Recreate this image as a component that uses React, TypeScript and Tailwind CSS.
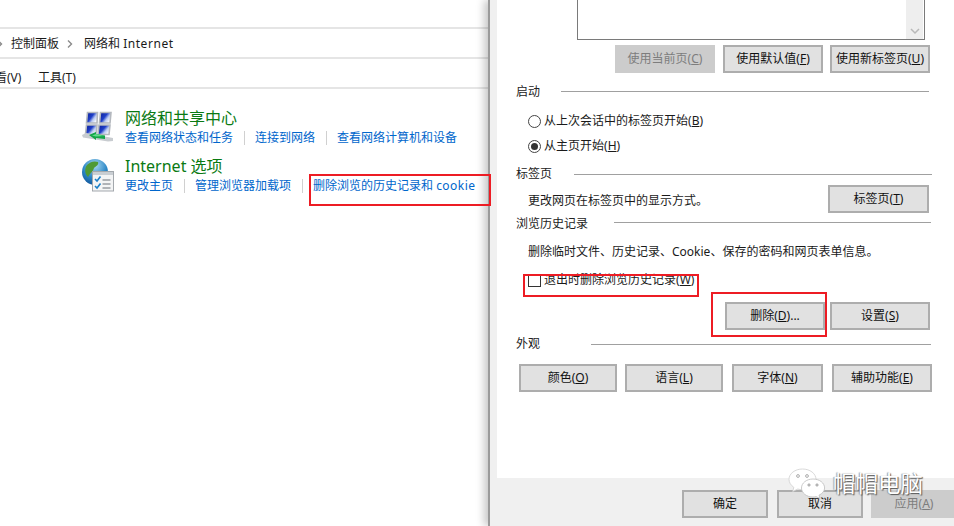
import React from "react";

function Acc({ before, k, after }: { before: string; k: string; after?: string }) {
  return (
    <>
      {before}(<span className="underline underline-offset-1">{k}</span>){after}
    </>
  );
}

function Btn({ w, disabled, ml, children }: { w: string; disabled?: boolean; ml?: string; children: React.ReactNode }) {
  return (
    <div
      className={`${w} ${ml ?? ""} h-[28px] shrink-0 flex items-center justify-center border-2 text-[12px] leading-none ${
        disabled ? "bg-[#cccccc] border-[#cccccc] text-[#7d7d7d]" : "bg-[#e1e1e1] border-[#adadad] text-[#111111]"
      }`}
    >
      <span>{children}</span>
    </div>
  );
}

function Section({ title, lineLeft, lineW, mt }: { title: string; lineLeft: string; lineW: string; mt: string }) {
  return (
    <div className={`flex items-center h-[16px] ${mt} ml-[19px] text-[12px] text-[#222222]`}>
      <span className={`${lineLeft} shrink-0`}>{title}</span>
      <span className={`${lineW} h-px bg-[#a0a0a0]`} />
    </div>
  );
}

function NetIcon() {
  return (
    <svg width="32" height="31" viewBox="0 0 32 31" className="block">
      <defs>
        <linearGradient id="scr" x1="0" y1="0" x2="1" y2="0.7">
          <stop offset="0" stopColor="#0a1c94" />
          <stop offset="0.5" stopColor="#1f3fc8" />
          <stop offset="0.72" stopColor="#b9c9f2" />
          <stop offset="1" stopColor="#ffffff" />
        </linearGradient>
      </defs>
      <g stroke="#b4b8be" strokeWidth="1.6">
        <polygon points="5.5,1.5 15.5,1.5 15,12 4.5,12" fill="url(#scr)" />
        <polygon points="18.5,1.5 29,1.5 28,12 17.5,12" fill="url(#scr)" />
        <polygon points="4.5,14 15,14 14,23.5 3.5,23.5" fill="url(#scr)" />
        <polygon points="17,14 28,14 27,23.5 16,23.5" fill="url(#scr)" />
      </g>
      <polygon points="0,24 4,22 31,27 31,30 26,30.5 1,26.5" fill="#c8ccd0" />
      <polygon points="7,24 14,21 14,23 23,24.5 23,28 14,27 14,29" fill="#14a548" />
      <polygon points="10,24.5 14,23 22,25 14,25.5" fill="#63dc8c" />
    </svg>
  );
}

function GlobeIcon() {
  return (
    <svg width="32" height="33" viewBox="0 0 32 33" className="block mt-[2px]">
      <defs>
        <radialGradient id="glb" cx="0.5" cy="0.25" r="0.85">
          <stop offset="0" stopColor="#a8d8f0" />
          <stop offset="0.55" stopColor="#2a86c6" />
          <stop offset="1" stopColor="#0d4a90" />
        </radialGradient>
      </defs>
      <circle cx="13" cy="13" r="13" fill="url(#glb)" />
      <path d="M5 6 C9 2 13 2 16 3 C17 6 14 7 12 9 C11 13 8 14 6 18 C3 15 2 10 5 6Z" fill="#4f9a35" />
      <path d="M14 16 C18 14 22 16 22 19 C20 23 16 25 13 24 C14 21 12 19 14 16Z" fill="#5aa83a" />
      <rect x="10.5" y="12.5" width="21" height="19.5" fill="#f3f4f5" stroke="#a3a8ad" />
      <rect x="11" y="13" width="20" height="3" fill="#c9ced3" />
      <path d="M13 20 L15 22 L18.5 17.5" fill="none" stroke="#1b7fc7" strokeWidth="1.6" />
      <path d="M13 27 L15 29 L18.5 24.5" fill="none" stroke="#1b7fc7" strokeWidth="1.6" />
      <path d="M20.5 21 H28.5 M20.5 25 H28.5 M20.5 29 H28.5" stroke="#6a7078" strokeWidth="1" />
    </svg>
  );
}

function WeChat() {
  return (
    <svg width="38" height="31" viewBox="0 0 38 31" className="block">
      <path d="M14.5 1 C7 1 1 5.6 1 11.4 C1 14.6 3 17.4 5.8 19.3 L4.7 23.6 L9.8 21 C11.3 21.5 12.9 21.7 14.5 21.7 C22 21.7 28 17 28 11.4 C28 5.6 22 1 14.5 1Z" fill="#ffffff" stroke="#cfcfcf" strokeWidth="0.8" />
      <circle cx="10" cy="8" r="1.4" fill="#ffffff" stroke="#8a8a8a" strokeWidth="0.7" />
      <circle cx="19" cy="8" r="1.4" fill="#ffffff" stroke="#8a8a8a" strokeWidth="0.7" />
      <path d="M25 11 C18.5 11 13.5 15 13.5 20 C13.5 25 18.5 29 25 29 C26 29 27.2 28.9 28.2 28.6 L32 30.5 L31 27.2 C34.5 25.5 36.6 23 36.6 20 C36.6 15 31.5 11 25 11Z" fill="#ffffff" stroke="#bdbdbd" strokeWidth="0.8" />
      <circle cx="21" cy="17" r="1.1" fill="#ffffff" stroke="#777777" strokeWidth="0.7" />
      <circle cx="29" cy="17" r="1.1" fill="#ffffff" stroke="#777777" strokeWidth="0.7" />
    </svg>
  );
}

function Sep() {
  return <span className="w-px h-[14px] bg-[#d0d0d0] mx-[10.5px] shrink-0" />;
}

export default function App() {
  return (
    <div
      className="relative w-[954px] h-[526px] overflow-hidden flex bg-white"
      style={{ fontFamily: '"Noto Sans", "Noto Sans CJK SC", sans-serif' }}
    >
      {/* Control panel window */}
      <div className="w-[488px] shrink-0 flex flex-col text-[12px] text-[#1a1a1a]">
        <div className="h-[29px] border-b-2 border-[#e5e5e5]" />
        <div className="h-[30px] border-b-2 border-[#e5e5e5] flex items-center pt-[2px]">
          <svg width="3" height="10" viewBox="0 0 3 10" className="mr-[8px]">
            <path d="M-2 1.5 L1.5 5 L-2 8.5" fill="none" stroke="#8a8a8a" strokeWidth="1.4" />
          </svg>
          <span>控制面板</span>
          <svg width="8" height="10" viewBox="0 0 8 10" className="ml-[7px] mr-[10px]">
            <path d="M2 1.5 L5.5 5 L2 8.5" fill="none" stroke="#8a8a8a" strokeWidth="1.4" />
          </svg>
          <span>网络和 <span className="tracking-[0.55px]">Internet</span></span>
        </div>
        <div className="h-[30px] border-b-2 border-[#e5e5e5] flex items-center pl-[38px] pt-[9px]">
          <span className="ml-[-43px] w-[43px] shrink-0">看(V)</span>
          <span>工具(T)</span>
        </div>
        <div className="flex pl-[82px] pt-[22px]">
          <div className="w-[43px] shrink-0"><NetIcon /></div>
          <div className="flex flex-col">
            <div className="text-[16px] leading-[20px] mt-[-3px] mb-[1px] text-[#0a7a12]">网络和共享中心</div>
            <div className="flex items-center h-[18px] text-[#0066cc]">
              <span>查看网络状态和任务</span><Sep />
              <span>连接到网络</span><Sep />
              <span>查看网络计算机和设备</span>
            </div>
          </div>
        </div>
        <div className="flex pl-[82px] pt-[10px]">
          <div className="w-[43px] shrink-0"><GlobeIcon /></div>
          <div className="flex flex-col">
            <div className="text-[16px] leading-[20px] mt-[-1px] mb-[1px] text-[#0a7a12]">Internet 选项</div>
            <div className="flex items-center h-[18px] text-[#0066cc]">
              <span>更改主页</span><Sep />
              <span>管理浏览器加载项</span><Sep />
              <span>删除浏览的历史记录和 <span className="tracking-[0.45px]">cookie</span></span>
            </div>
          </div>
        </div>
      </div>

      {/* Internet options dialog */}
      <div className="relative flex-1 flex flex-col bg-[#f0f0f0] border-l-2 border-[#9a9a9a] shadow-[-4px_0_8px_rgba(0,0,0,0.22)]">
        <div className="ml-[7px] h-[478px] bg-white flex flex-col text-[12px] text-[#1a1a1a]">
          <div className="ml-[80px] w-[348px] h-[40px] border border-t-0 border-[#7a7a7a] flex justify-end">
            <div className="w-[17px] mr-px bg-[#eeeeee] flex items-end justify-center pb-[4px]">
              <svg width="10" height="7" viewBox="0 0 10 7"><path d="M1 1 L5 5 L9 1" fill="none" stroke="#b8b8b8" strokeWidth="1.5" /></svg>
            </div>
          </div>
          <div className="flex mt-[5px] ml-[118px]">
            <Btn w="w-[100px]" disabled><Acc before="使用当前页" k="C" /></Btn>
            <Btn w="w-[100px]" ml="ml-[8px]"><Acc before="使用默认值" k="F" /></Btn>
            <Btn w="w-[100px]" ml="ml-[7px]"><Acc before="使用新标签页" k="U" /></Btn>
          </div>
          <Section title="启动" lineLeft="w-[45px]" lineW="w-[368px] mb-[2px]" mt="mt-[11px]" />
          <div className="flex items-center h-[16px] mt-[13px] ml-[31px]">
            <span className="w-[13px] h-[13px] rounded-full border border-[#444444] bg-white" />
            <span className="ml-[3px]"><Acc before="从上次会话中的标签页开始" k="B" /></span>
          </div>
          <div className="flex items-center h-[16px] mt-[9px] ml-[31px]">
            <span className="w-[13px] h-[13px] rounded-full border border-[#444444] bg-white flex items-center justify-center">
              <span className="w-[7px] h-[7px] rounded-full bg-[#333333]" />
            </span>
            <span className="ml-[3px]"><Acc before="从主页开始" k="H" /></span>
          </div>
          <Section title="标签页" lineLeft="w-[58px]" lineW="w-[358px]" mt="mt-[12px]" />
          <div className="flex items-center ml-[31px] mt-[3px] h-[28px]">
            <span className="w-[300px] pt-[3px]">更改网页在标签页中的显示方式。</span>
            <Btn w="w-[101px]"><Acc before="标签页" k="T" /></Btn>
          </div>
          <Section title="浏览历史记录" lineLeft="w-[98px]" lineW="w-[317px] mb-[4px]" mt="mt-[3px]" />
          <div className="flex items-center ml-[31px] mt-[12px] h-[16px]">删除临时文件、历史记录、Cookie、保存的密码和网页表单信息。</div>
          <div className="flex items-center ml-[31px] mt-[12px] h-[16px]">
            <span className="w-[13px] h-[13px] border border-[#333333] bg-white" />
            <span className="ml-[3px]"><Acc before="退出时删除浏览历史记录" k="W" /></span>
          </div>
          <div className="flex ml-[228px] mt-[14px]">
            <Btn w="w-[100px]"><Acc before="删除" k="D" after="..." /></Btn>
            <Btn w="w-[100px]" ml="ml-[5px]"><Acc before="设置" k="S" /></Btn>
          </div>
          <Section title="外观" lineLeft="w-[75px]" lineW="w-[340px]" mt="mt-[6px]" />
          <div className="flex ml-[22px] mt-[12px]">
            <Btn w="w-[98px]"><Acc before="颜色" k="O" /></Btn>
            <Btn w="w-[98px]" ml="ml-[8px]"><Acc before="语言" k="L" /></Btn>
            <Btn w="w-[91px]" ml="ml-[9px]"><Acc before="字体" k="N" /></Btn>
            <Btn w="w-[100px]" ml="ml-[9px]"><Acc before="辅助功能" k="E" /></Btn>
          </div>
        </div>
        <div className="flex mt-[12px] ml-[192px]">
          <Btn w="w-[86px]">确定</Btn>
          <Btn w="w-[86px]" ml="ml-[9px]">取消</Btn>
          <Btn w="w-[86px]" ml="ml-[8px]" disabled><Acc before="应用" k="A" /></Btn>
        </div>
      </div>

      {/* Red annotation boxes */}
      <div className="absolute left-[309px] top-[174px] w-[182px] h-[32px] border-[2px] border-[#ed1c24]" />
      <div className="absolute left-[523px] top-[274px] w-[176px] h-[23px] border-[2px] border-[#ed1c24]" />
      <div className="absolute left-[711px] top-[292px] w-[116px] h-[45px] border-[2px] border-[#ed1c24]" />

      {/* Watermark */}
      <div className="absolute left-[788px] top-[468px]"><WeChat /></div>
      <div className="absolute left-[833px] top-[469px] text-[22.5px] leading-[30px] text-white whitespace-nowrap [text-shadow:1px_1px_1px_#555555,-1px_0_1px_#999999]">帽帽电脑</div>
    </div>
  );
}
